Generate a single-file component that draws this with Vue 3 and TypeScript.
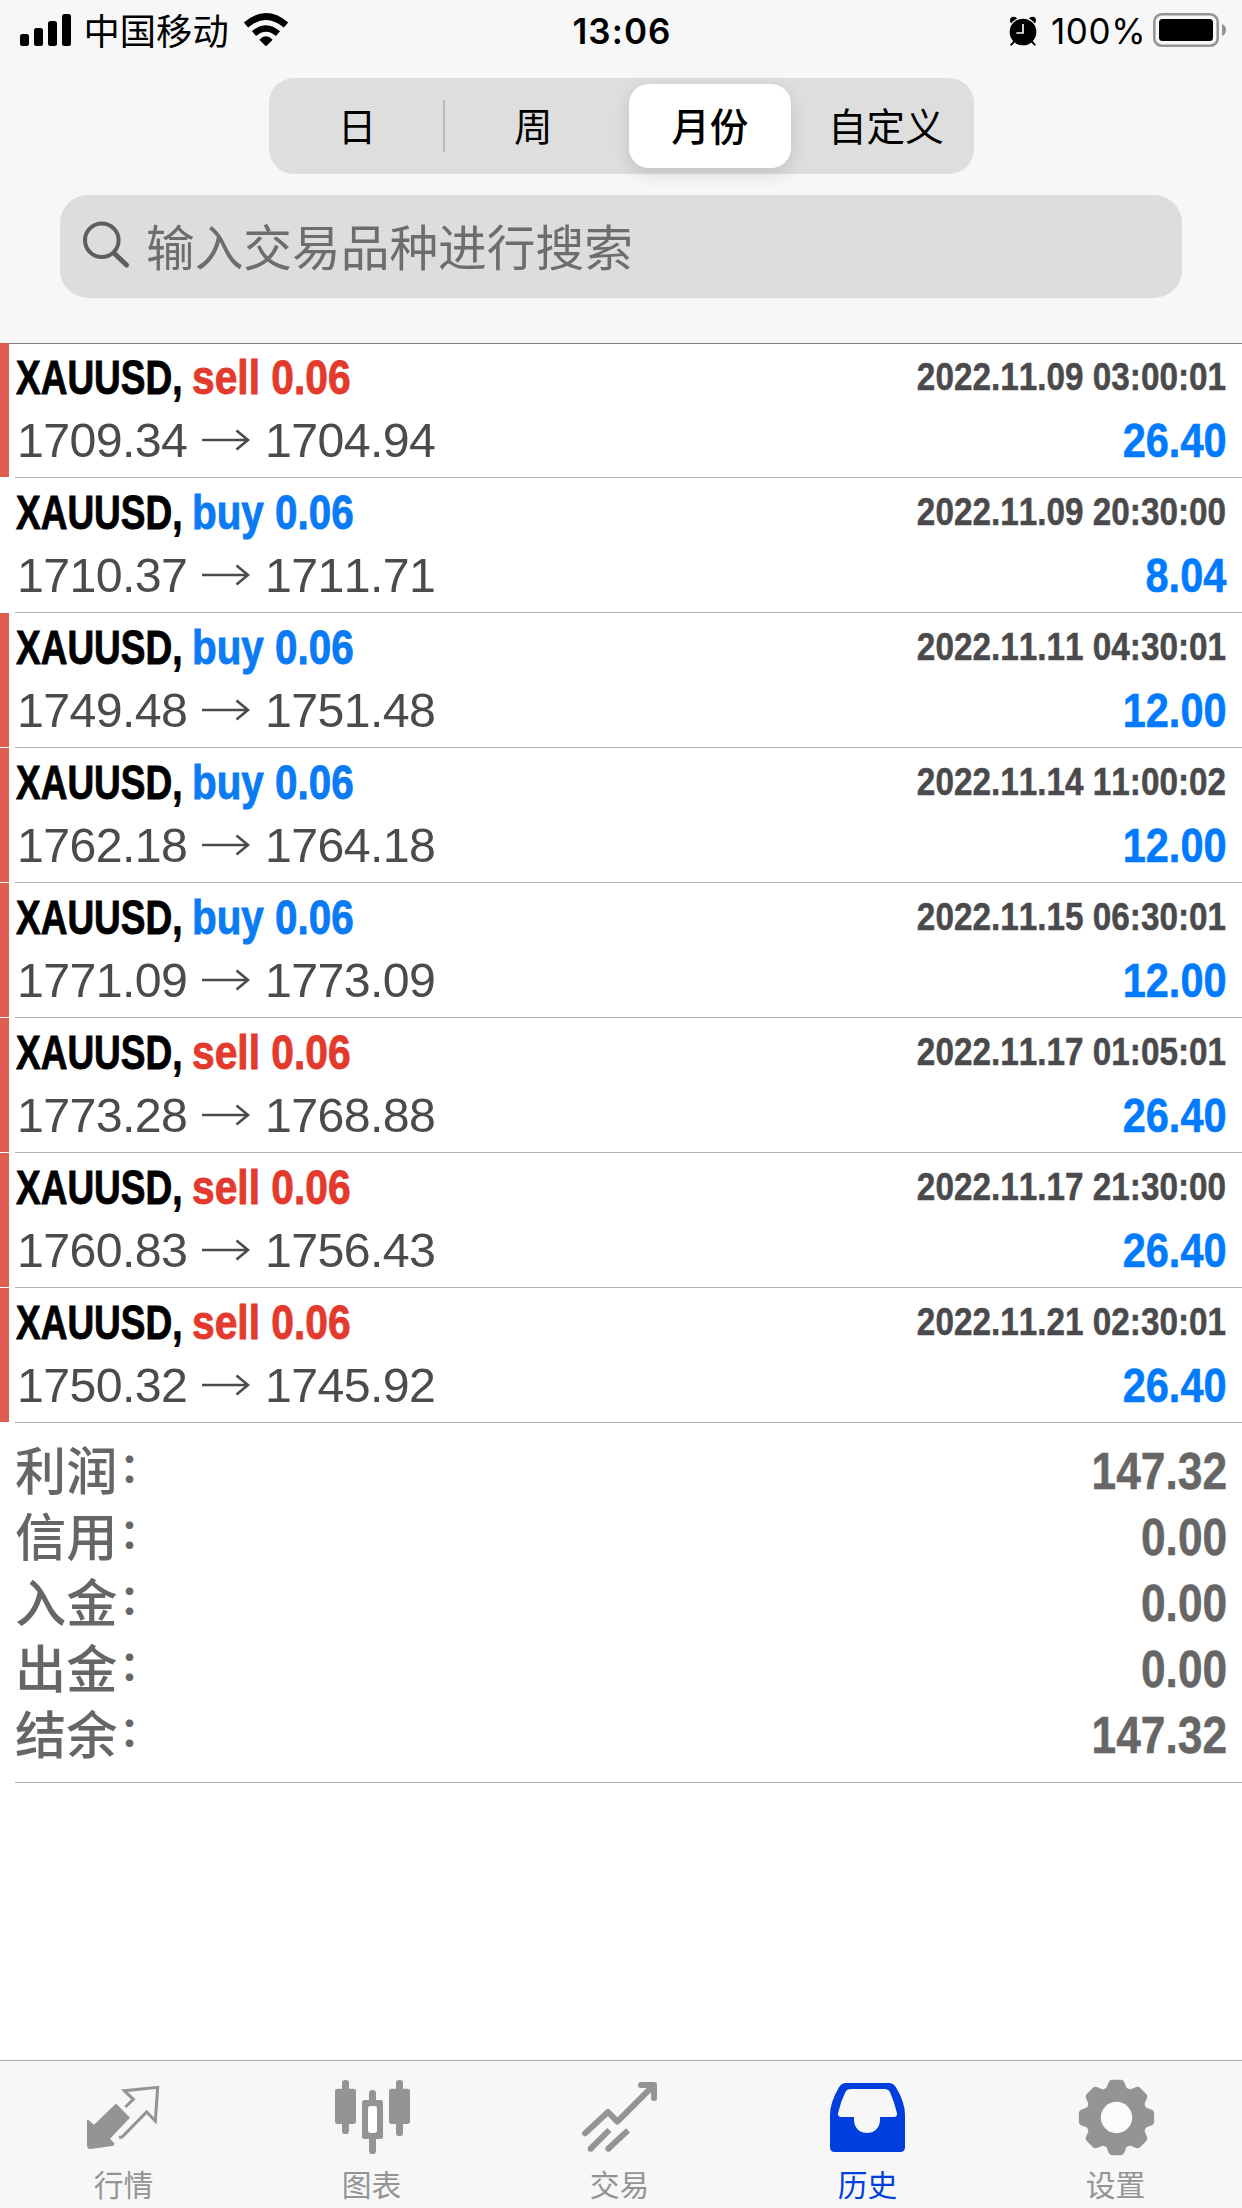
<script setup lang="ts">
interface Deal {
  side: 'buy' | 'sell'
  open: string
  close: string
  time: string
  profit: string
  marked: boolean
}

const deals: Deal[] = [
  { side: 'sell', open: '1709.34', close: '1704.94', time: '2022.11.09 03:00:01', profit: '26.40', marked: true },
  { side: 'buy', open: '1710.37', close: '1711.71', time: '2022.11.09 20:30:00', profit: '8.04', marked: false },
  { side: 'buy', open: '1749.48', close: '1751.48', time: '2022.11.11 04:30:01', profit: '12.00', marked: true },
  { side: 'buy', open: '1762.18', close: '1764.18', time: '2022.11.14 11:00:02', profit: '12.00', marked: true },
  { side: 'buy', open: '1771.09', close: '1773.09', time: '2022.11.15 06:30:01', profit: '12.00', marked: true },
  { side: 'sell', open: '1773.28', close: '1768.88', time: '2022.11.17 01:05:01', profit: '26.40', marked: true },
  { side: 'sell', open: '1760.83', close: '1756.43', time: '2022.11.17 21:30:00', profit: '26.40', marked: true },
  { side: 'sell', open: '1750.32', close: '1745.92', time: '2022.11.21 02:30:01', profit: '26.40', marked: true },
]

const totals = [
  { label: '利润', value: '147.32' },
  { label: '信用', value: '0.00' },
  { label: '入金', value: '0.00' },
  { label: '出金', value: '0.00' },
  { label: '结余', value: '147.32' },
]

const teeth = [0, 45, 90, 135, 180, 225, 270, 315]
</script>

<template>
  <div class="screen">
    <header class="header">
      <div class="status">
        <div class="status-left">
          <svg class="signal" width="52" height="32" viewBox="0 0 52 32">
            <rect x="0" y="20" width="9" height="12" rx="2.5" />
            <rect x="14" y="14" width="9" height="18" rx="2.5" />
            <rect x="28" y="7" width="9" height="25" rx="2.5" />
            <rect x="42" y="0" width="9" height="32" rx="2.5" />
          </svg>
          <span class="carrier">中国移动</span>
          <svg class="wifi" width="46" height="34" viewBox="0 0 138 102">
            <path d="M9 36 Q69 -15 129 36" fill="none" stroke="#000" stroke-width="20" />
            <path d="M33 62 Q69 31 105 62" fill="none" stroke="#000" stroke-width="19" />
            <path d="M49 80 Q69 60 89 80 L71 98 Q69 100 67 98 Z" />
          </svg>
        </div>
        <span class="clock">13:06</span>
        <div class="status-right">
          <svg class="alarm" width="28" height="30" viewBox="0 0 84 90">
            <circle cx="14" cy="13" r="11" />
            <circle cx="70" cy="13" r="11" />
            <circle cx="42" cy="48" r="44" fill="#f7f7f7" />
            <path d="M18 74 L7 86 M66 74 L77 86" stroke="#000" stroke-width="6" stroke-linecap="round" />
            <circle cx="42" cy="48" r="40" />
            <path d="M42 24 V51 H22" fill="none" stroke="#f7f7f7" stroke-width="5" />
          </svg>
          <span class="percent">100%</span>
          <svg class="battery" width="74" height="34" viewBox="0 0 74 34">
            <rect x="1.3" y="1.3" width="63.4" height="31.4" rx="7.5" fill="none" stroke="#959595" stroke-width="2.6" />
            <rect x="6" y="6" width="54" height="22" rx="3.5" />
            <path d="M69 11 Q73 12.500 73 17 Q73 21.500 69 23 Z" fill="#959595" />
          </svg>
        </div>
      </div>

      <div class="segments">
        <div class="segment">日</div>
        <div class="segment divided">周</div>
        <div class="segment active">月份</div>
        <div class="segment">自定义</div>
      </div>

      <div class="search">
        <svg width="48" height="48" viewBox="0 0 48 48" fill="none" stroke="#5e5e61" stroke-linecap="round">
          <circle cx="18.800" cy="19.200" r="16.800" stroke-width="4" />
          <path d="M31.500 32.500 L43.500 44" stroke-width="5" />
        </svg>
        <span>输入交易品种进行搜索</span>
      </div>
    </header>

    <main class="deals">
      <div v-for="deal in deals" :key="deal.time" class="deal">
        <div class="mark" :class="{ on: deal.marked }"></div>
        <div class="deal-body">
          <div class="deal-main">
            <div class="title">
              <span class="symbol"><b>XAUUSD,</b></span>
              <b class="side" :class="deal.side">{{ deal.side }} 0.06</b>
            </div>
            <div class="prices">
              <span>{{ deal.open }}</span>
              <svg width="48" height="24" viewBox="0 0 48 24" fill="none" stroke="#4b4b4d" stroke-width="2.600">
                <path d="M0 12 H46 M34.500 2.500 L46 12 L34.500 21.500" />
              </svg>
              <span>{{ deal.close }}</span>
            </div>
          </div>
          <div class="deal-side">
            <b class="time">{{ deal.time }}</b>
            <b class="profit">{{ deal.profit }}</b>
          </div>
        </div>
      </div>
    </main>

    <section class="totals">
      <div v-for="row in totals" :key="row.label" class="total">
        <div class="total-name">
          <span class="total-label">{{ row.label }}</span>
          <span class="colon">：</span>
        </div>
        <b class="total-value">{{ row.value }}</b>
      </div>
    </section>

    <nav class="tabs">
      <div class="tab">
        <svg width="80" height="80" viewBox="72 81 240 240" fill="currentColor">
          <path d="M81 211 Q82 207 86 211 L102 224 L164 164 Q168 160 172 164 L210 203 L150 266 L163 280 L161 287 L92 297 Q81 298 81 286 Z" />
          <path d="M177 262 L186 261 L260 186 L286 213 L293 112 L193 122 L220 148 L196 171" fill="none" stroke="currentColor" stroke-width="9" />
        </svg>
        <span>行情</span>
      </div>
      <div class="tab">
        <svg width="80" height="80" viewBox="816 81 240 240" fill="currentColor">
          <rect x="825" y="116" width="63" height="106" rx="8" />
          <rect x="846" y="90" width="21" height="162" rx="10" />
          <rect x="987" y="116" width="63" height="106" rx="8" />
          <rect x="1008" y="90" width="21" height="168" rx="10" />
          <rect x="927" y="120" width="21" height="192" rx="10" />
          <rect x="906" y="150" width="63" height="117" rx="8" />
          <rect x="924" y="168" width="27" height="81" rx="8" fill="#fff" />
        </svg>
        <span>图表</span>
      </div>
      <div class="tab">
        <svg width="80" height="80" viewBox="120 81 240 240" fill="none" stroke="currentColor" stroke-width="18">
          <path d="M135 250 L204 186 L232 215 L340 107" stroke-linecap="round" stroke-linejoin="round" />
          <path d="M303 105 H342 V144" stroke-linecap="round" stroke-linejoin="round" />
          <path d="M208 240 L152 296 M264 241 L205 296" />
          <path d="M152 296 h.1 M205 296 h.1" stroke-linecap="round" />
        </svg>
        <span>交易</span>
      </div>
      <div class="tab current">
        <svg width="80" height="80" viewBox="864 81 240 240" fill="currentColor" fill-rule="evenodd">
          <path d="M918 99 H1047 Q1060 99 1068 112 Q1095 158 1095 195 V292 Q1095 306 1081 306 H884 Q870 306 870 292 V195 Q870 158 897 112 Q905 99 918 99 Z M933 117 Q921 117 916 127 Q902 155 894 190 Q893 201 904 201 H942 V209 C942 262 1020 262 1020 209 V201 H1062 Q1072 201 1071 190 Q1063 155 1050 127 Q1045 117 1033 117 Z" />
        </svg>
        <span>历史</span>
      </div>
      <div class="tab">
        <svg width="80" height="80" viewBox="228 81 240 240" fill="currentColor">
          <g transform="translate(349.500 202.500)">
            <circle r="93" />
            <path
              v-for="angle in teeth"
              :key="angle"
              :transform="`rotate(${angle})`"
              d="M-40 -80 L-34 -85 C-25 -91 -27 -113 -13 -113 H13 C27 -113 25 -91 34 -85 L40 -80 Z"
            />
            <circle r="47" fill="#fbfbfb" />
          </g>
        </svg>
        <span>设置</span>
      </div>
    </nav>
  </div>
</template>

<style>
body {
  background: #fff;
}
</style>

<style scoped>
.screen {
  display: flex;
  flex-direction: column;
  width: 1242px;
  height: 2208px;
  overflow: hidden;
  background: #fff;
  font-family: 'Liberation Sans', 'Noto Sans CJK SC', sans-serif;
  font-kerning: none;
  white-space: nowrap;
}

svg {
  display: block;
  flex: none;
}

.header {
  box-sizing: border-box;
  height: 344px;
  flex: none;
  background: #f7f7f7;
  border-bottom: 1px solid #838383;
}

.status {
  display: flex;
  justify-content: space-between;
  height: 78px;
  font-family: Inter, 'Noto Sans CJK SC', sans-serif;
}

.status-left {
  display: flex;
  width: 499px;
  padding-left: 20px;
}

.signal {
  margin-top: 14px;
}

.carrier {
  width: 147px;
  margin-left: 11.500px;
  font: 400 36.300px/59px 'Noto Sans CJK SC', sans-serif;
}

.wifi {
  margin: 13px 0 0 12.500px;
}

.clock {
  font-size: 35px;
  font-weight: 600;
  line-height: 63px;
  letter-spacing: 1.1px;
}

.status-right {
  display: flex;
  justify-content: flex-end;
  width: 502px;
  padding-right: 15px;
}

.alarm {
  margin: 15.500px 14px 0 0;
}

.percent {
  width: 102px;
  font-size: 35px;
  line-height: 63px;
  letter-spacing: 0.6px;
}

.battery {
  margin-top: 13px;
}

.segments {
  display: grid;
  grid-template-columns: repeat(4, 1fr);
  width: 705px;
  height: 96px;
  margin-left: 269px;
  background: #dedede;
  border-radius: 25px;
}

.segment {
  position: relative;
  font: 400 38.600px/92px 'Noto Sans CJK SC', sans-serif;
  text-align: center;
}

.divided::before {
  content: '';
  position: absolute;
  left: -2px;
  top: 22px;
  width: 2px;
  height: 52px;
  background: #bababc;
}

.segment.active {
  margin: 6px 7px 6px 7.500px;
  background: #fff;
  border-radius: 20px;
  font-weight: 500;
  line-height: 80px;
  box-shadow: 0 6px 18px rgba(0, 0, 0, 0.13);
}

.search {
  display: flex;
  box-sizing: border-box;
  width: 1121.500px;
  height: 102.500px;
  margin: 21px 0 0 60px;
  padding: 26px 23px;
  background: #dddddf;
  border-radius: 28px;
}

.search span {
  margin: -26px 0 0 15px;
  color: #6d6d70;
  font: 400 48.700px/101px 'Noto Sans CJK SC', sans-serif;
}

.deals {
  margin-top: -1px;
}

.deal {
  display: flex;
  height: 135px;
}

.mark {
  width: 9px;
  height: 134px;
  margin-right: 6px;
}

.mark.on {
  background: #df5e52;
}

.deal-body {
  display: flex;
  flex: 1;
  box-sizing: border-box;
  justify-content: space-between;
  padding-right: 15.500px;
  border-bottom: 1px solid #b2b2b2;
}

.title {
  display: flex;
  height: 68px;
  padding-left: 1px;
  font-size: 49px;
  line-height: 68px;
}

.title b {
  display: block;
  transform-origin: left;
  -webkit-text-stroke: 0.9px currentColor;
}

.symbol {
  width: 176px;
}

.symbol b {
  width: 221px;
  transform: scaleX(0.755);
}

.side {
  transform: scaleX(0.832);
}

.buy {
  color: #0a7af5;
  transform: scaleX(0.824);
}

.sell {
  color: #e33a2d;
}

.prices {
  display: flex;
  margin-left: 2px;
  color: #4b4b4d;
  font-size: 48.300px;
  line-height: 59px;
  letter-spacing: -0.6px;
}

.prices svg {
  margin: 17px 14.500px 0 15px;
}

.deal-side {
  display: flex;
  flex-direction: column;
  align-items: flex-end;
}

.deal-side b {
  transform-origin: right;
}

.time {
  height: 68px;
  color: #4a4a4d;
  font-size: 39px;
  line-height: 67px;
  transform: scaleX(0.854);
  -webkit-text-stroke: 0.5px currentColor;
}

.profit {
  color: #007aff;
  font-size: 49px;
  line-height: 59px;
  transform: scaleX(0.848);
  -webkit-text-stroke: 0.6px currentColor;
}

.totals {
  box-sizing: border-box;
  height: 360px;
  margin-left: 15px;
  padding: 15px 15px 0 0;
  border-bottom: 1px solid #b2b2b2;
  color: #666;
}

.total {
  display: flex;
  justify-content: space-between;
  height: 66px;
}

.total-name {
  display: flex;
}

.total-label {
  font: 500 51.200px/61px 'Noto Sans CJK SC', sans-serif;
}

.colon {
  margin: -3px 0 0 2px;
  font: 700 40px/60px 'Noto Sans CJK SC', sans-serif;
}

.total-value {
  font-size: 52px;
  line-height: 66px;
  transform: scaleX(0.852);
  transform-origin: right;
  -webkit-text-stroke: 0.5px currentColor;
}

.tabs {
  display: flex;
  box-sizing: border-box;
  height: 148px;
  margin-top: auto;
  padding: 16px 2px 0 0;
  background: #f7f7f7;
  border-top: 1px solid #a9a9a9;
}

.tab {
  display: flex;
  flex: 1;
  flex-direction: column;
  align-items: center;
  color: #949494;
}

.tab span {
  margin: 6px 1px 0 0;
  font: 400 29.800px/41px 'Noto Sans CJK SC', sans-serif;
}

.tab.current {
  color: #003fdd;
}
</style>
